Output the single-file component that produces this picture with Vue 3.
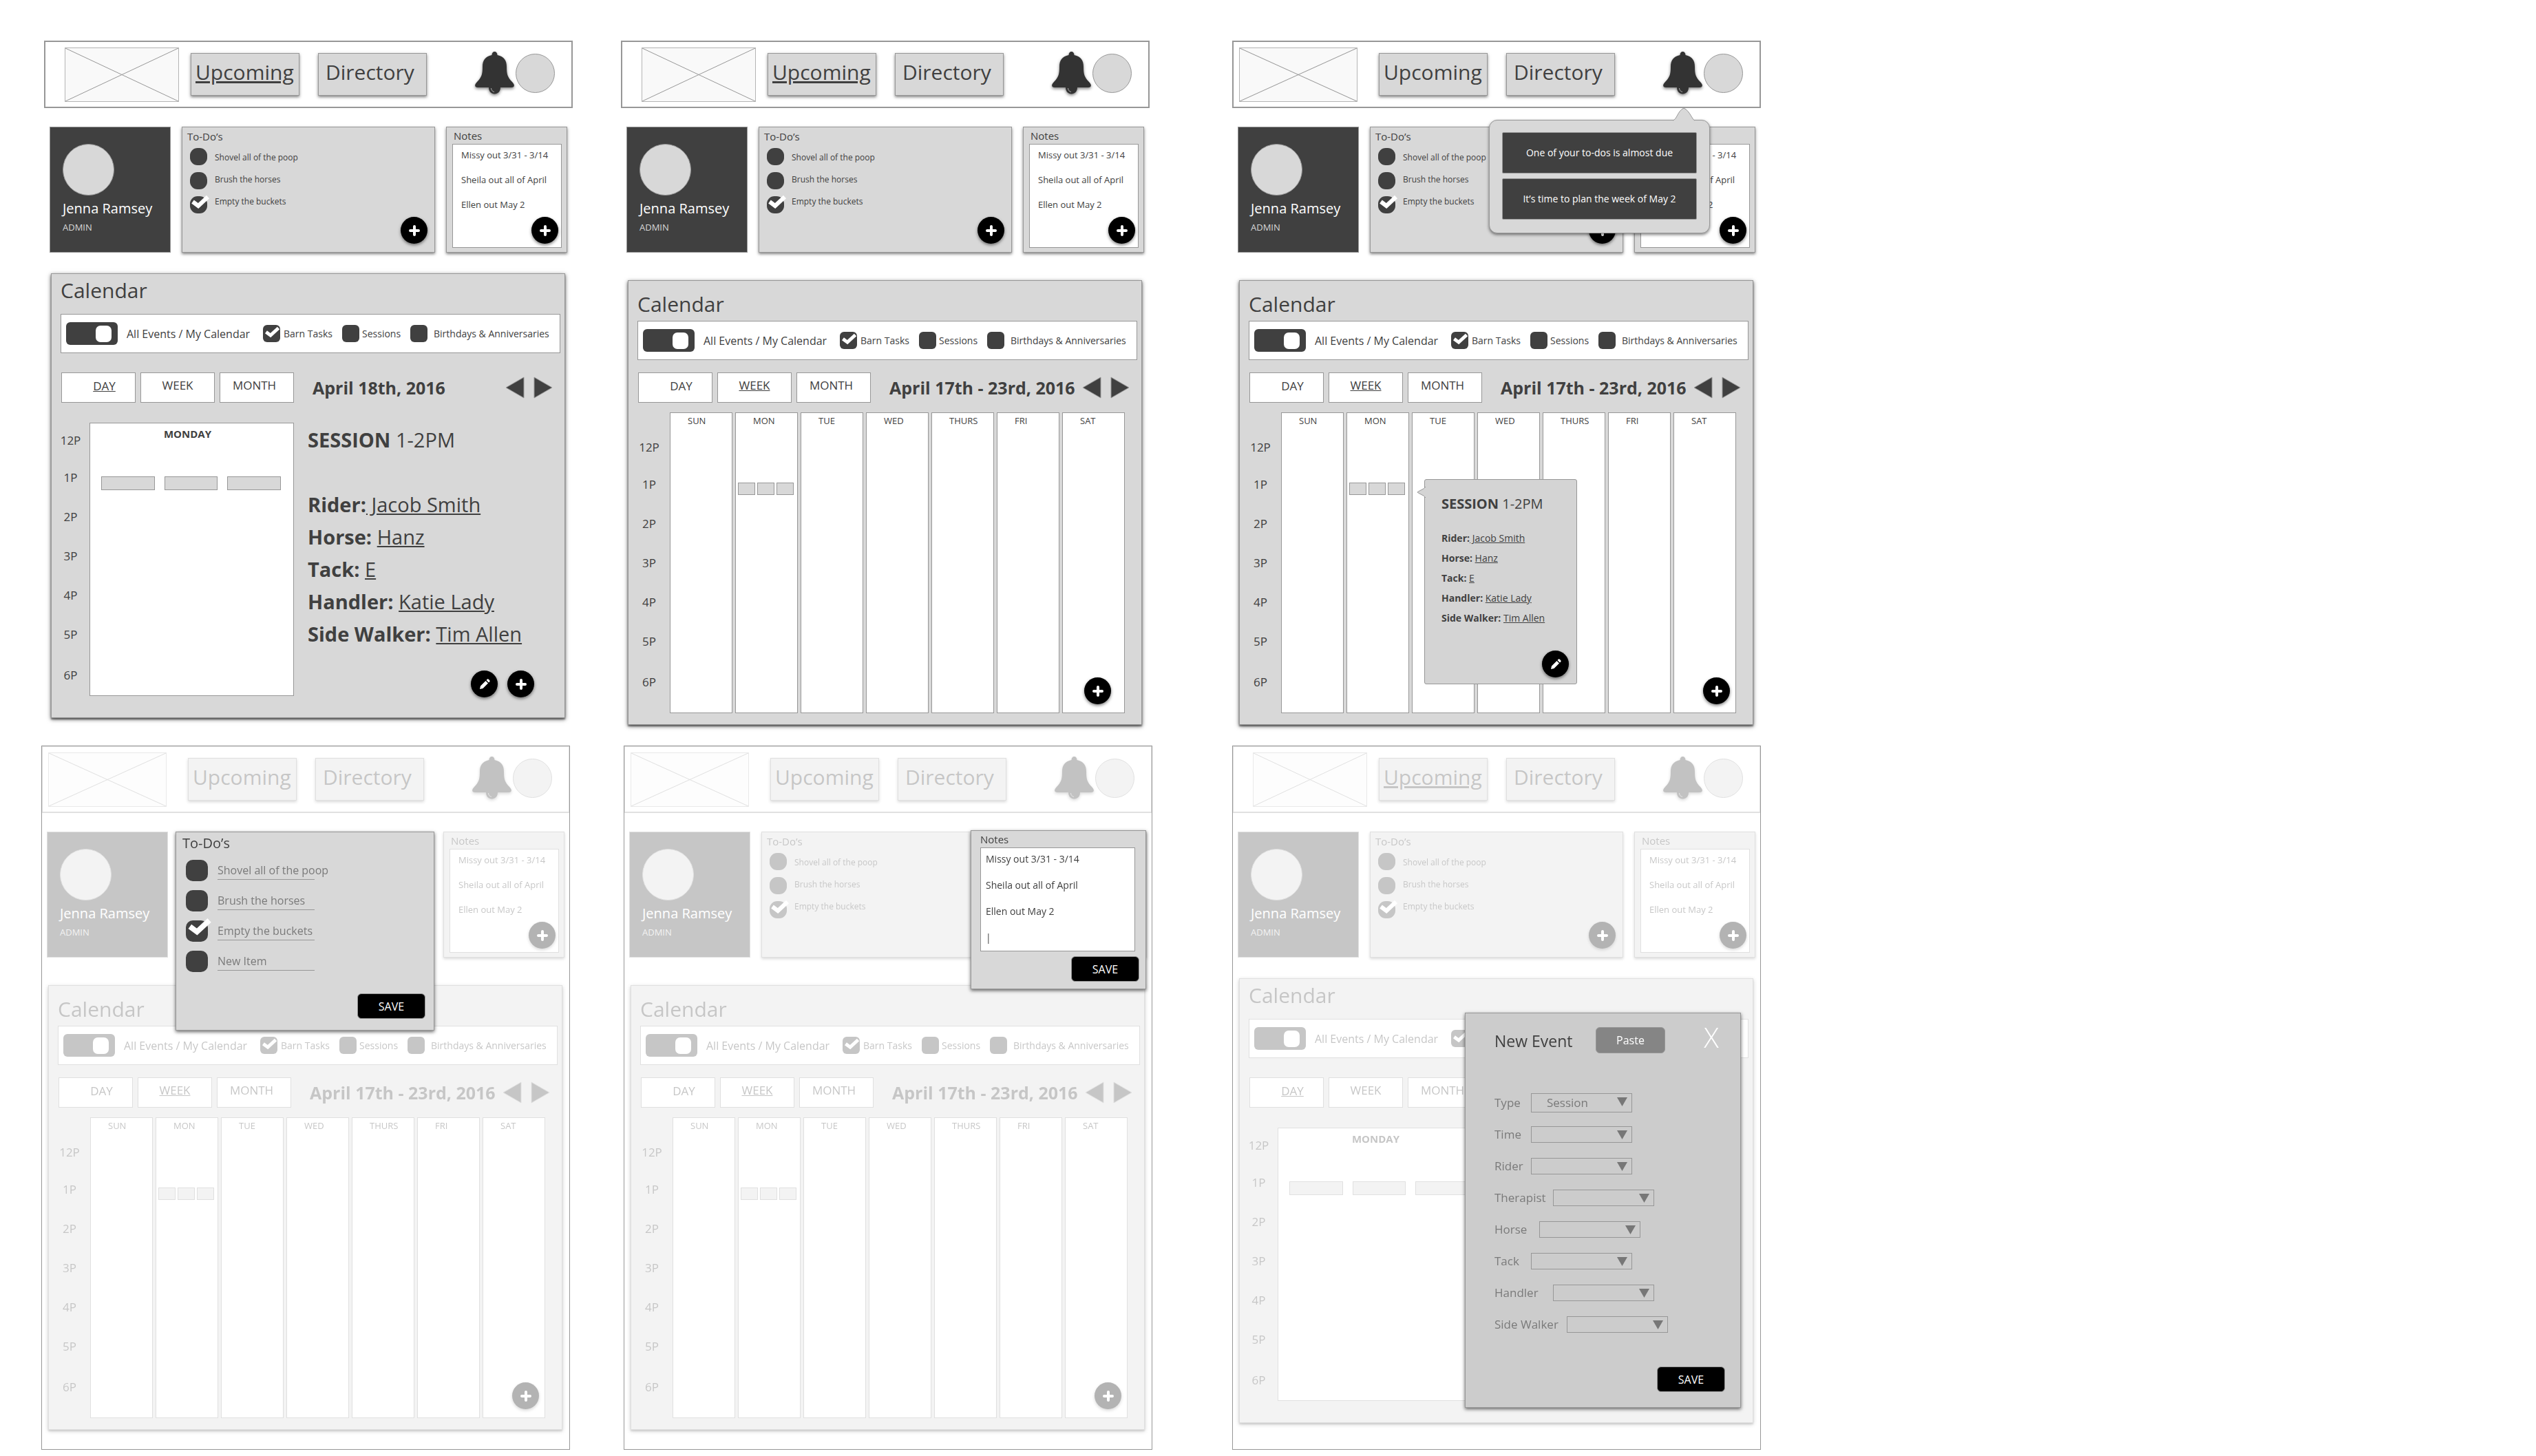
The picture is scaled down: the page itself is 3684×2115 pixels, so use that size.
<script setup>
const topRow = [
  { id: 'day', view: 'day', logo: 'narrow', current: true, overlay: '' },
  { id: 'week', view: 'week', logo: 'narrow', current: true, overlay: '', addInset: true },
  { id: 'alerts', view: 'week', logo: 'wide', current: false, overlay: 'alerts' },
]
const bottomRow = [
  { id: 'todo-edit', view: 'week', logo: 'wide', current: false, overlay: 'todos', dim: true },
  { id: 'notes-edit', view: 'week', logo: 'wide', current: false, overlay: 'notes', dim: true },
  { id: 'event-new', view: 'day', logo: 'narrow', current: true, overlay: 'event', dim: true },
]
const rows = [
  { name: 'top', screens: topRow },
  { name: 'bottom', screens: bottomRow },
]

const todos = [
  { label: 'Shovel all of the poop', done: false },
  { label: 'Brush the horses', done: false },
  { label: 'Empty the buckets', done: true },
]
const editTodos = [...todos, { label: 'New Item', done: false }]
const notes = ['Missy out 3/31 - 3/14', 'Sheila out all of April', 'Ellen out May 2']
const notesDraft = notes.join('\n\n') + '\n\n|'
const filters = [
  { key: 'barn', label: 'Barn Tasks', on: true },
  { key: 'sessions', label: 'Sessions', on: false },
  { key: 'birthdays', label: 'Birthdays & Anniversaries', on: false },
]
// The event form covers everything right of the first filter box.
const filtersFor = (s) => (s.overlay === 'event' ? [{ ...filters[0], label: '' }] : filters)
const tabs = ['day', 'week', 'month']
const hours = ['12P', '1P', '2P', '3P', '4P', '5P', '6P']
const days = ['SUN', 'MON', 'TUE', 'WED', 'THURS', 'FRI', 'SAT']
const session = [
  { key: 'Rider:', value: ' Jacob Smith', joined: true },
  { key: 'Horse:', value: 'Hanz' },
  { key: 'Tack:', value: 'E' },
  { key: 'Handler:', value: 'Katie Lady' },
  { key: 'Side Walker:', value: 'Tim Allen' },
]
const fields = [
  { label: 'Type', size: 'short', value: 'Session' },
  { label: 'Time', size: 'short' },
  { label: 'Rider', size: 'short' },
  { label: 'Therapist', size: 'long' },
  { label: 'Horse', size: 'medium' },
  { label: 'Tack', size: 'short' },
  { label: 'Handler', size: 'long' },
  { label: 'Side Walker', size: 'widest' },
]
</script>

<template>
  <main class="board">
    <div v-for="row in rows" :key="row.name" class="row" :class="row.name">
      <section v-for="s in row.screens" :key="s.id" class="screen" :class="{ framed: s.dim }">
        <div class="page" :class="{ dim: s.dim }">
          <header class="header">
            <div class="logo-slot" :class="s.logo">
              <svg class="logo" viewBox="0 0 100 100" preserveAspectRatio="none" aria-hidden="true">
                <path d="M0 0L100 100M100 0L0 100" vector-effect="non-scaling-stroke" />
              </svg>
            </div>
            <nav class="nav">
              <button type="button" class="nav-item" :class="{ current: s.current }">Upcoming</button>
              <button type="button" class="nav-item directory">Directory</button>
            </nav>
            <div class="account">
              <button type="button" class="bell" aria-label="Notifications">
                <svg viewBox="0 0 57 62" aria-hidden="true">
                  <path d="M28.5 0C26 0 24.5 2 24.5 5C14.5 7 11 13 11 22C11 32 10 37 3 44C-1 48 -1 52 4 52H20C20 58 24 61.5 28.5 61.5S37 58 37 52H53C58 52 58 48 54 44C47 37 46 32 46 22C46 13 42.5 7 32.5 5C32.5 2 31 0 28.5 0Z" fill="#333" />
                  <path d="M23.5 53C23.5 56 25.5 58 28 58.5" fill="none" stroke="#aaa" stroke-width="1" />
                </svg>
              </button>
              <span class="avatar"></span>
            </div>
          </header>

          <div class="cards">
            <article class="card profile">
              <span class="portrait"></span>
              <h2>Jenna Ramsey</h2>
              <p>ADMIN</p>
            </article>
            <article class="card todo">
              <template v-if="s.overlay !== 'todos'">
                <h3>To-Do’s</h3>
                <div class="todo-list">
                  <div class="ticks">
                    <span v-for="(t, i) in todos" :key="i" class="tick round">
                      <input :id="`${s.id}-todo-${i}`" type="checkbox" :checked="t.done" />
                      <svg v-if="t.done" viewBox="0 0 28 22" aria-hidden="true"><path d="M3 10L11 16L25 3" /></svg>
                    </span>
                  </div>
                  <div class="labels">
                    <label v-for="(t, i) in todos" :key="i" :for="`${s.id}-todo-${i}`">{{ t.label }}</label>
                  </div>
                </div>
                <button v-if="s.overlay !== 'notes'" type="button" class="fab in-todo" aria-label="Add to-do">
                  <svg viewBox="0 0 16 16" aria-hidden="true"><path d="M8 2V14M2 8H14" /></svg>
                </button>
              </template>
            </article>
            <article class="card notes">
              <template v-if="s.overlay !== 'notes'">
                <h3 v-if="s.overlay !== 'alerts'">Notes</h3>
                <h3 v-else>&nbsp;</h3>
                <div class="notes-body">
                  <p v-for="n in notes" :key="n">{{ n }}</p>
                </div>
                <button type="button" class="fab in-notes" aria-label="Add note">
                  <svg viewBox="0 0 16 16" aria-hidden="true"><path d="M8 2V14M2 8H14" /></svg>
                </button>
              </template>
            </article>
          </div>

          <section class="calendar" :class="s.view">
            <h1>Calendar</h1>
            <div class="filters">
              <label class="toggle">
                <input type="checkbox" role="switch" checked />
                <span>All Events / My Calendar</span>
              </label>
              <div v-for="f in filtersFor(s)" :key="f.key" class="filter" :class="f.key">
                <span class="tick">
                  <input :id="`${s.id}-${f.key}`" type="checkbox" :checked="f.on" />
                  <svg v-if="f.on" viewBox="0 0 28 22" aria-hidden="true"><path d="M3 10L11 16L25 3" /></svg>
                </span>
                <label :for="`${s.id}-${f.key}`">{{ f.label }}</label>
              </div>
            </div>

            <div class="toolbar">
              <div class="tabs">
                <button v-for="t in tabs" :key="t" type="button" :class="[t, { current: t === s.view }]">{{ t.toUpperCase() }}</button>
              </div>
              <template v-if="s.overlay !== 'event'">
                <h2 class="date">{{ s.view === 'day' ? 'April 18th, 2016' : 'April 17th - 23rd, 2016' }}</h2>
                <div class="arrows">
                  <button type="button" aria-label="Previous">
                    <svg viewBox="0 0 28 32" aria-hidden="true"><path d="M27 1V31L1 16Z" /></svg>
                  </button>
                  <button type="button" aria-label="Next">
                    <svg viewBox="0 0 28 32" aria-hidden="true"><path d="M1 1V31L27 16Z" /></svg>
                  </button>
                </div>
              </template>
            </div>

            <div class="schedule">
              <ul class="hours">
                <li v-for="h in hours" :key="h">{{ h }}</li>
              </ul>
              <template v-if="s.view === 'day'">
                <div class="day-column">
                  <h3>MONDAY</h3>
                  <div class="day-events"><i></i><i></i><i></i></div>
                </div>
                <div v-if="s.overlay !== 'event'" class="session">
                  <h3><b>SESSION</b> 1-2PM</h3>
                  <p v-for="r in session" :key="r.key">
                    <b>{{ r.key }}</b><template v-if="!r.joined">&nbsp;</template><a href="#" :class="{ joined: r.joined }">{{ r.value }}</a>
                  </p>
                </div>
              </template>
              <div v-else class="week-columns">
                <div v-for="d in days" :key="d" class="week-column">
                  <h3>{{ d }}</h3>
                  <div v-if="d === 'MON'" class="week-events"><i></i><i></i><i></i></div>
                </div>
              </div>
            </div>

            <div v-if="s.overlay !== 'event'" class="actions" :class="{ inset: s.addInset }">
              <button v-if="s.view === 'day'" type="button" class="fab" aria-label="Edit session">
                <svg viewBox="0 0 16 16" aria-hidden="true"><path class="pencil" d="M1 15L2 10.5L9.5 3L13 6.5L5.5 14ZM10.5 2L12 .5Q13 0 14 1L15 2Q16 3 15.5 4L14 5.5Z" /></svg>
              </button>
              <button type="button" class="fab" aria-label="Add event">
                <svg viewBox="0 0 16 16" aria-hidden="true"><path d="M8 2V14M2 8H14" /></svg>
              </button>
            </div>

            <aside v-if="s.overlay === 'alerts'" class="popover">
              <svg class="popover-tail" viewBox="0 0 13 18" aria-hidden="true"><path d="M13 1Q11 4 6 6Q2 8 1 9Q2 10 6 12Q11 14 13 17" /></svg>
              <div class="session small">
                <h3><b>SESSION</b> 1-2PM</h3>
                <p v-for="r in session" :key="r.key">
                  <b>{{ r.key }}</b><template v-if="!r.joined">&nbsp;</template><a href="#" :class="{ joined: r.joined }">{{ r.value }}</a>
                </p>
              </div>
              <button type="button" class="fab" aria-label="Edit session">
                <svg viewBox="0 0 16 16" aria-hidden="true"><path class="pencil" d="M1 15L2 10.5L9.5 3L13 6.5L5.5 14ZM10.5 2L12 .5Q13 0 14 1L15 2Q16 3 15.5 4L14 5.5Z" /></svg>
              </button>
            </aside>
          </section>
        </div>

        <aside v-if="s.overlay === 'alerts'" class="alerts">
          <svg class="alerts-tail" viewBox="0 0 34 20" aria-hidden="true"><path d="M1 19C7 18 8 5 17 1C26 5 29 18 33 19" /></svg>
          <p>One of your to-dos is almost due</p>
          <p>It’s time to plan the week of May 2</p>
        </aside>

        <form v-if="s.overlay === 'todos'" class="modal todo-modal" @submit.prevent>
          <h3>To-Do’s</h3>
          <div v-for="(t, i) in editTodos" :key="i" class="edit-row">
            <span class="tick">
              <input type="checkbox" :checked="t.done" :aria-label="`Done: ${t.label}`" />
              <svg v-if="t.done" viewBox="0 0 28 22" aria-hidden="true"><path d="M3 10L11 16L25 3" /></svg>
            </span>
            <input type="text" class="edit-text" :value="t.label" :aria-label="`To-do ${i + 1}`" />
          </div>
          <button class="save">SAVE</button>
        </form>

        <form v-if="s.overlay === 'notes'" class="modal notes-modal" @submit.prevent>
          <label for="notes-draft">Notes</label>
          <textarea id="notes-draft" :value="notesDraft"></textarea>
          <button class="save">SAVE</button>
        </form>

        <form v-if="s.overlay === 'event'" class="modal event-modal" @submit.prevent>
          <div class="event-head">
            <h2>New Event</h2>
            <button type="button" class="paste">Paste</button>
            <button type="button" class="close" aria-label="Close">X</button>
          </div>
          <div v-for="f in fields" :key="f.label" class="field">
            <label :for="`event-${f.label}`" :class="f.size">{{ f.label }}</label>
            <span class="select" :class="{ filled: f.value }">
              <select :id="`event-${f.label}`"><option>{{ f.value || '' }}</option></select>
              <svg viewBox="0 0 15 13" aria-hidden="true"><path d="M0 0H15L7.5 13Z" /></svg>
            </span>
          </div>
          <button class="save">SAVE</button>
        </form>
      </section>
    </div>
  </main>
</template>

<style>
body {
  margin: 0;
  background: #fff;
}
</style>

<style scoped>
* {
  box-sizing: border-box;
}
h1, h2, h3, p, ul {
  margin: 0;
  padding: 0;
  font-weight: 400;
  list-style: none;
}
button, input, select, textarea {
  margin: 0;
  padding: 0;
  border: 0;
  border-radius: 0;
  background: none;
  font: inherit;
  color: inherit;
  appearance: none;
}
.board {
  padding: 59px 0 9px;
  display: flex;
  flex-direction: column;
  gap: 30px;
  font-family: "Open Sans", "Noto Sans", sans-serif;
  color: #404040;
}
.row {
  display: grid;
}
.row.top {
  grid-template-columns: 64fr 768fr 70fr 768fr 120fr 768fr 1126fr;
}
.row.bottom {
  grid-template-columns: 60fr 768fr 78fr 768fr 116fr 768fr 1126fr;
}
.screen {
  position: relative;
  min-width: 0;
}
.screen:nth-child(1) { grid-column: 2; }
.screen:nth-child(2) { grid-column: 4; }
.screen:nth-child(3) { grid-column: 6; }
.framed {
  outline: 1px solid #979797;
  outline-offset: -1px;
  padding-bottom: 29px;
}
.dim {
  opacity: .3;
}

/* header */
.header {
  height: 98px;
  display: flex;
  align-items: center;
  border: 2px solid #979797;
  background: #fff;
}
.logo-slot {
  width: 211px;
  display: flex;
}
.logo-slot.narrow { padding: 0 17px 0 28px; }
.logo-slot.wide { padding: 0 31px 0 8px; }
.logo {
  flex: 1;
  height: 79px;
  border: 1px solid #b4b4b4;
  background: #f9f9f9;
}
.logo path {
  fill: none;
  stroke: #979797;
  stroke-width: 1px;
}
.nav {
  display: flex;
  gap: 27px;
}
.nav-item {
  width: 158px;
  height: 62px;
  padding: 0 0 6px 6px;
  border: 1px solid #979797;
  background: #d8d8d8;
  box-shadow: 0 2px 4px rgba(0, 0, 0, .5);
  font-size: 30px;
  line-height: 40px;
  text-align: left;
}
.nav-item.directory { padding-left: 10px; }
.current { text-decoration: underline; }
.account {
  margin-left: auto;
  padding: 0 24px 4px 0;
  display: flex;
  align-items: center;
  gap: 2px;
}
.bell {
  width: 57px;
  height: 62px;
}
.bell svg {
  display: block;
  width: 100%;
  overflow: visible;
  filter: drop-shadow(0 2px 2px rgba(0, 0, 0, .5));
}
.avatar {
  width: 57px;
  height: 57px;
  border: 1px solid #979797;
  border-radius: 50%;
  background: #d8d8d8;
}

/* cards */
.cards {
  margin: 27px 8px 0;
  display: grid;
  grid-template-columns: 176fr 368fr 176fr;
  gap: 16px;
}
.card {
  position: relative;
  height: 183px;
  border: 1px solid #979797;
  background: #d8d8d8;
  box-shadow: 0 2px 4px rgba(0, 0, 0, .5);
}
.card.profile {
  padding: 24px 0 0 18px;
  background: #404040;
  box-shadow: none;
}
.portrait {
  display: block;
  width: 75px;
  height: 75px;
  border: 1px solid #979797;
  border-radius: 50%;
  background: #d8d8d8;
}
.profile h2 {
  margin-top: 5px;
  font-size: 20px;
  line-height: 28px;
  color: #fff;
}
.profile p {
  margin-top: 3px;
  font-size: 13px;
  line-height: 20px;
  color: #d8d8d8;
}
.todo h3 {
  padding: 3px 0 0 7px;
  font-size: 15px;
  line-height: 20px;
}
.todo-list {
  padding: 7px 0 0 11px;
  display: flex;
  gap: 11px;
}
.ticks {
  display: flex;
  flex-direction: column;
  gap: 10px;
}
.labels {
  display: flex;
  flex-direction: column;
}
.labels label {
  padding-top: 2px;
  height: 32px;
  font-size: 12px;
  line-height: 24px;
}
.tick {
  position: relative;
  display: block;
  width: 25px;
  height: 25px;
}
.tick input {
  display: block;
  width: 100%;
  height: 100%;
  border-radius: 6px;
  background: #404040;
}
.tick.round input { border-radius: 11px; }
.tick svg {
  position: absolute;
  left: 2px;
  top: 2px;
  width: 23px;
  pointer-events: none;
}
.tick.round svg {
  left: 1px;
  top: -2px;
  width: 28px;
}
.tick path {
  fill: none;
  stroke: #fff;
  stroke-width: 6;
}
.notes h3 {
  padding: 2px 0 0 10px;
  font-size: 15px;
  line-height: 20px;
}
.notes-body {
  margin: 2px 7px 0 8px;
  height: 151px;
  padding: 0 0 0 12px;
  border: 1px solid #979797;
  background: #fff;
}
.notes-body p {
  height: 36px;
  font-size: 13px;
  line-height: 30px;
  white-space: nowrap;
}

.fab {
  width: 39px;
  height: 39px;
  display: flex;
  align-items: center;
  justify-content: center;
  border-radius: 50%;
  background: #000;
  box-shadow: 0 2px 4px rgba(0, 0, 0, .5);
}
.fab svg {
  width: 16px;
  height: 16px;
}
.fab path {
  fill: none;
  stroke: #fff;
  stroke-width: 4;
  stroke-linecap: round;
}
.fab .pencil {
  fill: #fff;
  stroke: none;
}
.fab.in-todo {
  position: absolute;
  right: 10px;
  bottom: 12px;
}
.fab.in-notes {
  position: absolute;
  right: 12px;
  bottom: 12px;
}

/* calendar */
.calendar {
  position: relative;
  margin: 40px 11px 0 10px;
  height: 646px;
  border: 1px solid #979797;
  background: #d8d8d8;
  box-shadow: 0 2px 6px rgba(0, 0, 0, .6), 0 2px 2px rgba(0, 0, 0, .4);
}
.calendar.day { margin-top: 30px; }
.calendar h1 {
  height: 58px;
  padding: 14px 0 0 13px;
  font-size: 30px;
  line-height: 40px;
}
.calendar.day h1 { padding-top: 4px; }
.filters {
  margin: 0 6px 0 13px;
  height: 57px;
  padding-left: 7px;
  display: flex;
  align-items: center;
  border: 1px solid #979797;
  background: #fff;
  white-space: nowrap;
}
.toggle {
  width: 286px;
  display: flex;
  align-items: center;
  gap: 13px;
  font-size: 16px;
  line-height: 24px;
}
.toggle input {
  flex: none;
  width: 75px;
  height: 33px;
  border-radius: 6px;
  background: #404040;
  display: flex;
  align-items: center;
  justify-content: flex-end;
  padding-right: 9px;
}
.toggle input::after {
  content: "";
  width: 23px;
  height: 24px;
  border-radius: 7px;
  background: #fff;
}
.filter {
  display: flex;
  align-items: center;
  gap: 4px;
  font-size: 14px;
  line-height: 20px;
}
.filter.barn {
  width: 115px;
  gap: 5px;
}
.filter.sessions { width: 99px; }
.filter.birthdays { gap: 9px; }
.toolbar {
  margin: 18px 17px 0 14px;
  height: 44px;
  display: flex;
  align-items: center;
}
.day .toolbar { margin-top: 28px; }
.tabs {
  display: flex;
  gap: 7px;
}
.tabs button {
  width: 108px;
  height: 44px;
  padding-bottom: 6px;
  border: 1px solid #979797;
  background: #fff;
  font-size: 17px;
  line-height: 24px;
}
.tabs button.day { padding: 0 0 4px 17px; }
.tabs button.month { padding-right: 7px; }
.date {
  margin-left: 27px;
  font-size: 25px;
  line-height: 32px;
  font-weight: 700;
  white-space: nowrap;
}
.arrows {
  margin-left: auto;
  display: flex;
  gap: 13px;
}
.arrows button {
  width: 28px;
  height: 32px;
}
.arrows svg {
  display: block;
  width: 100%;
}
.arrows path {
  fill: #404040;
  stroke: #979797;
}
.schedule {
  margin-top: 14px;
  height: 437px;
  display: flex;
}
.day .schedule {
  margin-top: 29px;
  height: 397px;
}
.hours {
  width: 60px;
  padding-top: 39px;
  font-size: 17px;
  line-height: 24px;
  text-align: center;
}
.day .hours {
  width: 55px;
  padding-top: 14px;
}
.hours li { height: 57px; }
.hours li:first-child { height: 54px; }
.hours li:nth-child(6) { height: 59px; }
.day-column {
  width: 297px;
  border: 1px solid #979797;
  background: #fff;
}
.day-column h3 {
  padding: 5px 12px 0 0;
  font-size: 15px;
  line-height: 20px;
  font-weight: 700;
  text-align: center;
}
.day-events {
  margin: 52px 18px 0 16px;
  display: grid;
  grid-template-columns: repeat(3, 1fr);
  gap: 14px;
}
.day-events i {
  height: 20px;
  border: 1px solid #979797;
  background: #d8d8d8;
}
.week-columns {
  flex: 1;
  margin-right: 24px;
  display: grid;
  grid-template-columns: repeat(7, 1fr);
  gap: 4px;
}
.week-column {
  border: 1px solid #979797;
  background: #fff;
}
.week-column h3 {
  padding: 1px 0 0 25px;
  font-size: 13px;
  line-height: 20px;
}
.week-events {
  margin: 80px 5px 0 3px;
  display: grid;
  grid-template-columns: repeat(3, 1fr);
  gap: 3px;
}
.week-events i {
  height: 18px;
  border: 1px solid #979797;
  background: #d8d8d8;
}
.session {
  padding: 5px 0 0 20px;
  font-size: 29px;
  line-height: 47px;
  white-space: nowrap;
}
.session h3 {
  margin-bottom: 50px;
  font-size: 29px;
  line-height: 40px;
}
.session a { color: inherit; }
.session a.joined { white-space: pre; }
.session.small {
  padding: 21px 0 0 24px;
  font-size: 14px;
  line-height: 29px;
}
.session.small h3 {
  margin-bottom: 21px;
  font-size: 20px;
  line-height: 28px;
}
.actions {
  position: absolute;
  right: 33px;
  bottom: 29px;
  display: flex;
  gap: 14px;
}
.actions.inset,
.day .actions { right: 44px; }

.popover {
  position: absolute;
  left: 268px;
  top: 288px;
  width: 222px;
  height: 298px;
  border: 1px solid #979797;
  border-radius: 3px;
  background: #d4d4d4;
}
.popover-tail {
  position: absolute;
  left: -12px;
  top: 9px;
  width: 13px;
  height: 18px;
}
.popover-tail path {
  fill: #d4d4d4;
  stroke: #979797;
}
.popover .fab {
  position: absolute;
  right: 11px;
  bottom: 9px;
}

/* overlays */
.alerts {
  position: absolute;
  right: 74px;
  top: 115px;
  width: 321px;
  height: 165px;
  padding: 17px 18px 0;
  display: flex;
  flex-direction: column;
  gap: 7px;
  border: 1px solid #979797;
  border-radius: 12px;
  background: #d8d8d8;
  box-shadow: 0 2px 4px rgba(0, 0, 0, .5);
}
.alerts-tail {
  position: absolute;
  right: 20px;
  top: -19px;
  width: 34px;
  height: 20px;
}
.alerts-tail path {
  fill: #d8d8d8;
  stroke: #979797;
}
.alerts p {
  height: 60px;
  border: 1px solid #979797;
  border-radius: 2px;
  background: #404040;
  color: #fff;
  font-size: 14px;
  line-height: 58px;
  text-align: center;
}
.modal {
  position: absolute;
  border: 1px solid #979797;
  background: #d8d8d8;
  box-shadow: 0 2px 5px rgba(0, 0, 0, .6);
}
.save {
  position: absolute;
  width: 99px;
  height: 37px;
  border: 1px solid #979797;
  border-radius: 6px;
  background: #000;
  color: #fff;
  font-size: 16px;
  line-height: 24px;
}
.todo-modal {
  left: 195px;
  top: 125px;
  width: 376px;
  height: 289px;
}
.todo-modal h3 {
  height: 40px;
  padding: 2px 0 0 9px;
  font-size: 20px;
  line-height: 28px;
}
.edit-row {
  height: 44px;
  padding-left: 14px;
  display: flex;
  gap: 14px;
}
.edit-row .tick {
  width: 32px;
  height: 31px;
}
.edit-row .tick input { border-radius: 10px; }
.edit-row .tick svg {
  left: 2px;
  top: -4px;
  width: 36px;
}
.edit-text {
  width: 180px;
  height: 29px;
  font-size: 16px;
  line-height: 24px;
  color: #7a7a7a;
  background: linear-gradient(#979797, #979797) left bottom / 141px 1px no-repeat;
}
.todo-modal .save {
  right: 12px;
  bottom: 16px;
}
.notes-modal {
  right: 9px;
  top: 123px;
  width: 255px;
  height: 231px;
  padding: 1px 15px 0 13px;
}
.notes-modal label {
  display: block;
  font-size: 15px;
  line-height: 23px;
}
.notes-modal textarea {
  display: block;
  width: 100%;
  height: 151px;
  padding: 6px 0 0 7px;
  border: 1px solid #979797;
  background: #fff;
  font-size: 14px;
  line-height: 19px;
  resize: none;
  overflow: hidden;
}
.notes-modal .save {
  right: 9px;
  bottom: 10px;
}
.event-modal {
  right: 29px;
  top: 388px;
  width: 401px;
  height: 574px;
  padding: 20px 0 0 42px;
  background: #ccc;
}
.event-head {
  height: 87px;
  display: flex;
  align-items: flex-start;
}
.event-head h2 {
  width: 147px;
  padding-top: 4px;
  font-size: 23px;
  line-height: 32px;
}
.paste {
  width: 101px;
  height: 38px;
  border: 1px solid #979797;
  border-radius: 6px;
  background: #858585;
  color: #fff;
  font-size: 16px;
  line-height: 24px;
}
.close {
  margin-left: 55px;
  width: 24px;
  font-size: 40px;
  line-height: 30px;
  font-weight: 300;
  color: #fff;
}
.field {
  height: 46px;
  display: flex;
  align-items: center;
  font-size: 17px;
  line-height: 24px;
  color: #7a7a7a;
}
.field label { white-space: nowrap; }
.short { width: 53px; }
.medium { width: 65px; }
.long { width: 85px; }
.widest { width: 105px; }
.select {
  position: relative;
  width: 147px;
  height: 24px;
}
.select.filled { height: 28px; }
.select select {
  display: block;
  width: 100%;
  height: 100%;
  padding-left: 22px;
  border: 1px solid #979797;
}
.select svg {
  position: absolute;
  right: 7px;
  top: 6px;
  width: 15px;
  height: 13px;
  pointer-events: none;
}
.select path { fill: #777; }
.event-modal .save {
  right: 22px;
  bottom: 22px;
}
</style>
